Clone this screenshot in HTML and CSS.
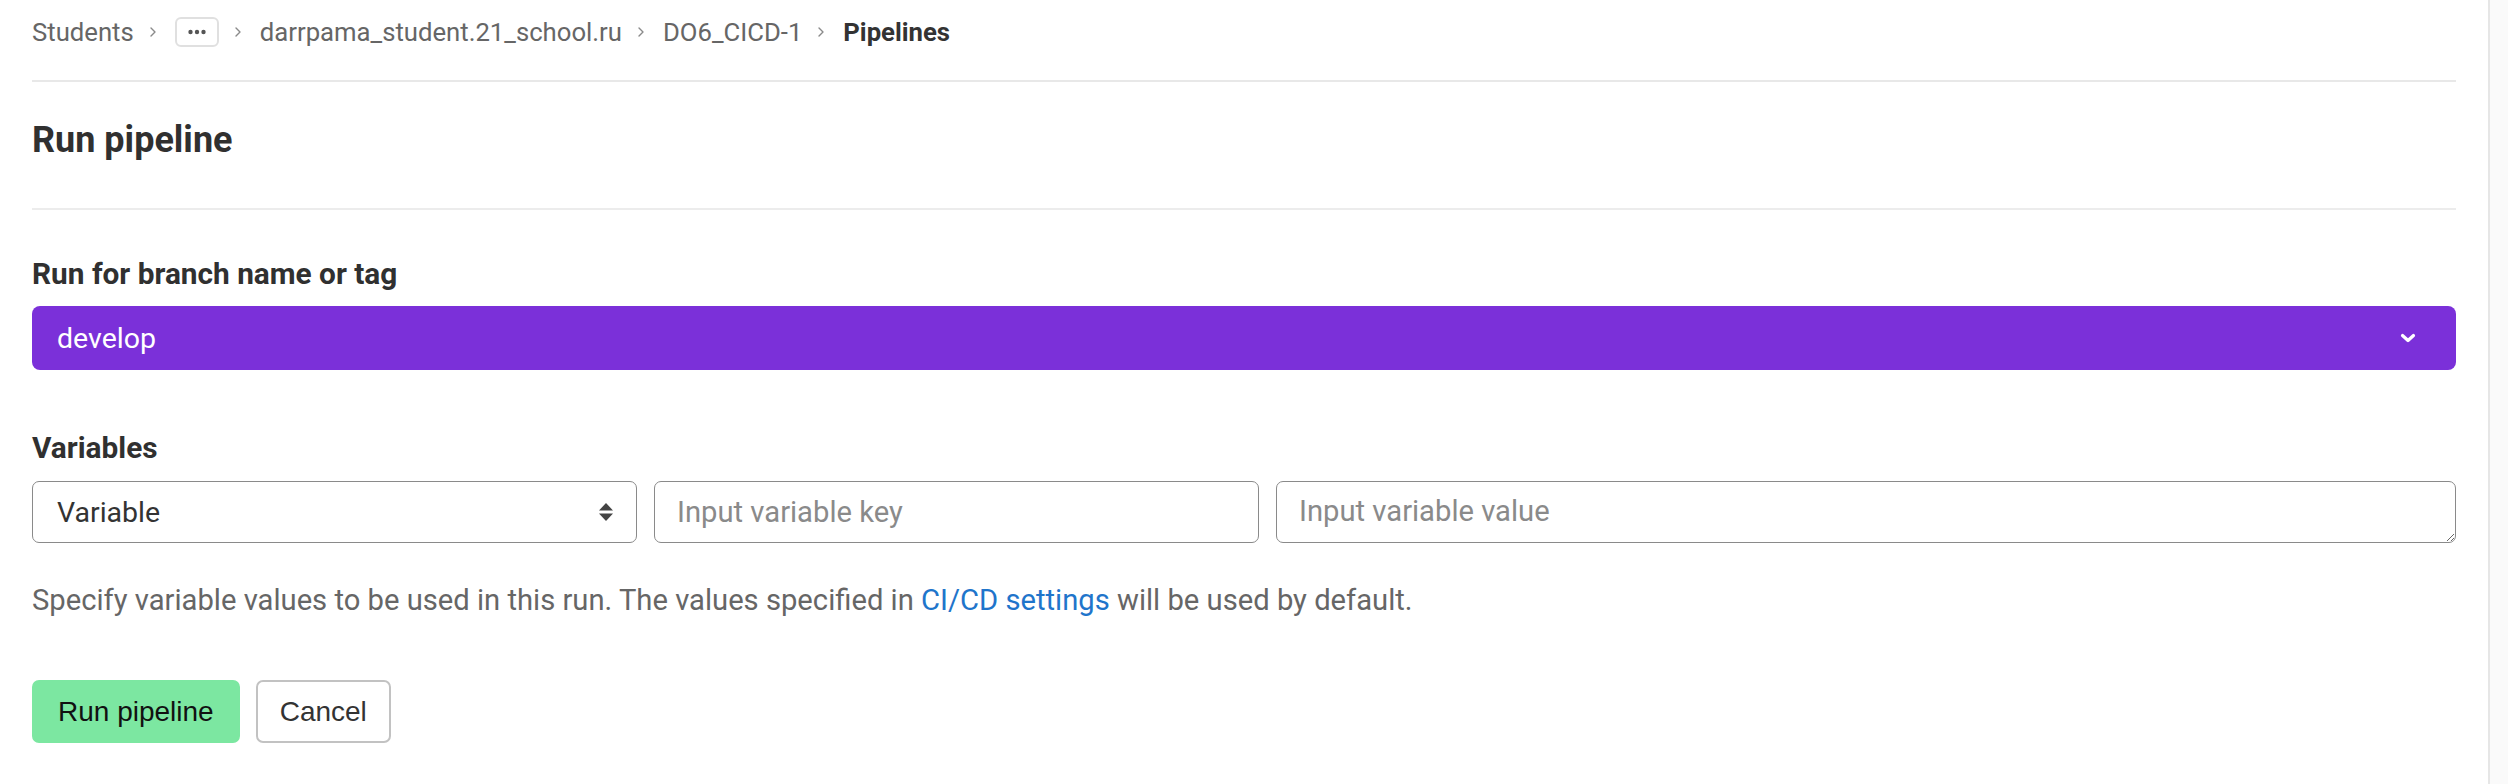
FILE: index.html
```html
<!DOCTYPE html>
<html lang="en">
<head>
<meta charset="utf-8">
<title>Run pipeline</title>
<link rel="stylesheet" href="styles.css">
</head>
<body>
<div class="layout">
  <main class="content">
    <nav class="breadcrumbs">
      <a class="crumb" href="#">Students</a>
      <svg class="sep" width="8" height="12" viewBox="0 0 8 12"><path d="M2 2l4 4-4 4" fill="none" stroke="#8a8a8a" stroke-width="1.4" stroke-linecap="round" stroke-linejoin="round"/></svg>
      <button class="crumb-more" type="button"><svg width="20" height="6" viewBox="0 0 20 6"><circle cx="3.5" cy="3" r="2.2" fill="#555"/><circle cx="10" cy="3" r="2.2" fill="#555"/><circle cx="16.5" cy="3" r="2.2" fill="#555"/></svg></button>
      <svg class="sep" width="8" height="12" viewBox="0 0 8 12"><path d="M2 2l4 4-4 4" fill="none" stroke="#8a8a8a" stroke-width="1.4" stroke-linecap="round" stroke-linejoin="round"/></svg>
      <a class="crumb" href="#">darrpama_student.21_school.ru</a>
      <svg class="sep" width="8" height="12" viewBox="0 0 8 12"><path d="M2 2l4 4-4 4" fill="none" stroke="#8a8a8a" stroke-width="1.4" stroke-linecap="round" stroke-linejoin="round"/></svg>
      <a class="crumb" href="#">DO6_CICD-1</a>
      <svg class="sep" width="8" height="12" viewBox="0 0 8 12"><path d="M2 2l4 4-4 4" fill="none" stroke="#8a8a8a" stroke-width="1.4" stroke-linecap="round" stroke-linejoin="round"/></svg>
      <a class="crumb crumb-current" href="#">Pipelines</a>
    </nav>
    <div class="page-title">
      <h1>Run pipeline</h1>
    </div>
    <form class="form">
      <label class="label">Run for branch name or tag</label>
      <button class="branch-dropdown" type="button">
        <span>develop</span>
        <svg width="16" height="10" viewBox="0 0 16 10"><path d="M2.5 2.5l5.5 5 5.5-5" fill="none" stroke="#fff" stroke-width="3.2" stroke-linecap="round" stroke-linejoin="round"/></svg>
      </button>
      <label class="label label-vars">Variables</label>
      <div class="var-row">
        <div class="select">
          <span>Variable</span>
          <svg width="16" height="22" viewBox="0 0 16 22"><path d="M8 2L15 9.5H1z" fill="#444"/><path d="M8 20L15 12.5H1z" fill="#444"/></svg>
        </div>
        <input class="input" type="text" placeholder="Input variable key">
        <textarea class="textarea" placeholder="Input variable value"></textarea>
      </div>
      <p class="help">Specify variable values to be used in this run. The values specified in <a href="#">CI/CD settings</a> will be used by default.</p>
      <div class="actions">
        <button class="btn btn-run" type="button">Run pipeline</button>
        <button class="btn btn-cancel" type="button">Cancel</button>
      </div>
    </form>
  </main>
  <aside class="scroll-track"></aside>
</div>
</body>
</html>
```

FILE: styles.css
```css
* { box-sizing: border-box; }
html, body { margin: 0; padding: 0; background: #fff; }
body {
  font-family: Roboto, "Liberation Sans", sans-serif;
  color: #333;
}
.layout { display: flex; height: 784px; }
.content { flex: 1; padding: 0 32px; min-width: 0; }
.scroll-track { width: 20px; border-left: 2px solid #e6e6e6; background: #fafafa; }

.breadcrumbs {
  display: flex;
  align-items: center;
  height: 82px;
  padding-bottom: 16px;
  border-bottom: 2px solid #e8e8e8;
  font-size: 25.7px;
}
.sep { margin: 0 18px 0 15px; flex: none; }
.crumb { color: #666; text-decoration: none; white-space: nowrap; }
.crumb-current { color: #333; font-weight: 700; }
.crumb-more {
  width: 44px; height: 30px;
  border: 2px solid #e0e0e0; border-radius: 6px;
  background: #fff; padding: 0;
  display: flex; align-items: center; justify-content: center;
}

.page-title { padding: 38px 0 48px; border-bottom: 2px solid #ececec; }
.page-title h1 { margin: 0; font-size: 36px; line-height: 40px; font-weight: 700; color: #303030; }

.form { padding-top: 46px; }
.label { display: block; font-weight: 700; font-size: 29.8px; line-height: 36px; margin-bottom: 14px; color: #303030; }
.branch-dropdown {
  width: 100%; height: 64px;
  background: #7b30d9; border: 0; border-radius: 8px;
  display: flex; align-items: center; justify-content: space-between;
  padding: 0 40px 0 25px;
  color: #fff; font-family: inherit; font-size: 28.5px;
}
.label-vars { margin-top: 60px; margin-bottom: 15px; }

.var-row { display: grid; grid-template-columns: 605px 605px 1fr; column-gap: 17px; height: 62px; }
.select, .input, .textarea {
  height: 62px;
  border: 1.5px solid #8a8a8a; border-radius: 7px;
  background: #fff;
  font-family: inherit; font-size: 29.2px; color: #333;
}
.select { display: flex; align-items: center; justify-content: space-between; padding: 0 22px 0 24px; font-size: 28.5px; }
.input { padding: 0 22px; outline: none; }
.textarea { padding: 11px 22px; resize: both; outline: none; line-height: 36px; }
.input::placeholder, .textarea::placeholder { color: #8a8a8a; }

.help { margin: 39px 0 0; font-size: 29.2px; line-height: 36px; color: #666; }
.help a { color: #1f75cb; text-decoration: none; }

.actions { margin-top: 62px; display: flex; gap: 16px; }
.btn {
  height: 63px; padding: 0 24px;
  font-family: "Liberation Sans", Arial, sans-serif; font-size: 28px;
  border-radius: 7px;
}
.btn-run { background: #7ce7a1; border: 2px solid #7ce7a1; color: #111; }
.btn-cancel { background: #fff; border: 2px solid #c2c2c2; color: #333; padding: 0 22px; }
```
